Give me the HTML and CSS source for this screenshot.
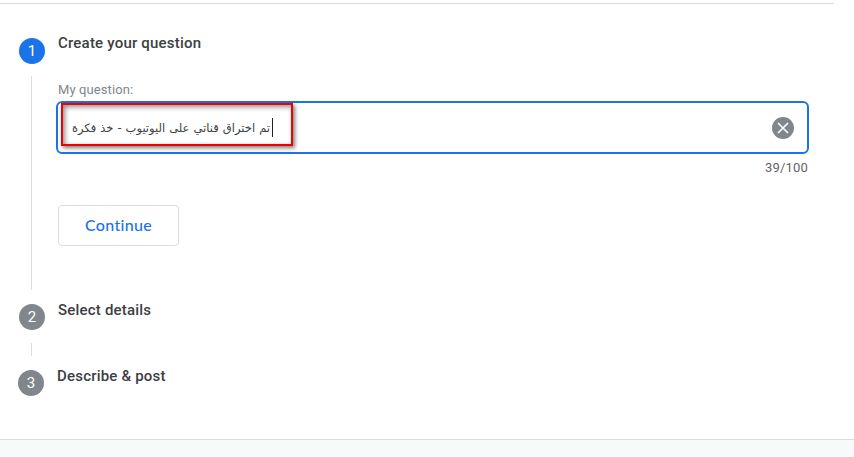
FILE: index.html
```
<!DOCTYPE html>
<html lang="en">
<head>
    <meta charset="UTF-8">
    <meta name="viewport" content="width=device-width, initial-scale=1.0">
    <title>Create your question</title>
    <link rel="stylesheet" href="styles.css">
</head>
<body>
    <main class="stepper">
        <section class="step step-active">
            <div class="rail">
                <span class="badge">1</span>
                <span class="line"></span>
            </div>
            <div class="content">
                <h2>Create your question</h2>
                <div class="label">My question:</div>
                <div class="field">
                    <div class="highlight"></div>
                    <div class="value"><span class="text" dir="rtl" lang="ar">تم اختراق قناتي على اليوتيوب - خذ فكرة</span><span class="caret"></span></div>
                    <svg class="clear" viewBox="0 0 22 22" width="22" height="22">
                        <circle cx="11" cy="11" r="11" fill="#80868b"/>
                        <path d="M6 6l10 10M16 6L6 16" stroke="#fff" stroke-width="1.6" fill="none"/>
                    </svg>
                </div>
                <div class="counter">39/100</div>
                <button type="button">Continue</button>
            </div>
        </section>
        <section class="step step-details">
            <div class="rail">
                <span class="badge">2</span>
                <span class="line"></span>
            </div>
            <div class="content">
                <h2>Select details</h2>
            </div>
        </section>
        <section class="step step-post">
            <div class="rail">
                <span class="badge">3</span>
            </div>
            <div class="content">
                <h2>Describe &amp; post</h2>
            </div>
        </section>
    </main>
    <footer></footer>
</body>
</html>
```
FILE: styles.css
```
* {
    margin: 0;
    padding: 0;
    box-sizing: border-box;
}

body {
    height: 100vh;
    display: flex;
    flex-direction: column;
    padding-top: 3px;
    overflow: hidden;
    background: #fff;
    color: #3c4043;
    font-family: Roboto, sans-serif;
}

.stepper {
    flex: 1;
    width: 834px;
    padding: 34px 25px 0 19px;
    border-top: 1px solid #dadce0;
}

.step {
    display: flex;
    gap: 13px;
}

.step-active {
    height: 266px;
}

.step-details {
    height: 66px;
}

.step-post {
    margin-left: -1px;
}

.rail {
    width: 26px;
    display: flex;
    flex-direction: column;
    align-items: center;
}

.badge {
    flex: none;
    width: 26px;
    height: 26px;
    border-radius: 50%;
    background: #80868b;
    color: #fff;
    font-size: 15px;
    line-height: 26px;
    text-align: center;
}

.step-active .badge {
    background: #1a73e8;
}

.line {
    flex: 1;
    width: 1px;
    margin: 12px 1px 14px 0;
    background: #dadce0;
}

.step-details .line {
    margin: 13px 1px 14px 0;
}

.content {
    flex: 1;
    display: flex;
    flex-direction: column;
}

h2 {
    margin-top: -4px;
    font-size: 15px;
    font-weight: 500;
    line-height: 20px;
    letter-spacing: 0.2px;
}

.step-active h2 {
    margin-top: -5px;
}

.label {
    margin-top: 29px;
    color: #80868b;
    font-size: 13px;
    line-height: 16px;
    letter-spacing: 0.1px;
}

.field {
    position: relative;
    display: flex;
    align-items: center;
    justify-content: space-between;
    height: 53px;
    margin: 3px 0 0 -2px;
    padding: 0 13px 0 14px;
    border: 2px solid #1a73e8;
    border-radius: 6px;
}

/* marker box laid over the left end of the input */
.highlight {
    position: absolute;
    top: 0;
    left: 3px;
    width: 232px;
    height: 43px;
    border: 2px solid #f00000;
    box-shadow: 2px 2px 4px rgba(0, 0, 0, 0.5), inset 2px 2px 5px rgba(0, 0, 0, 0.45);
}

.value {
    display: flex;
    align-items: center;
}

.text {
    width: 198px;
    color: #3c4043;
    font-family: "DejaVu Sans", sans-serif;
    font-size: 11.5px;
    line-height: 20px;
    word-spacing: 0.4px;
    white-space: nowrap;
}

.caret {
    width: 1px;
    height: 19px;
    margin-left: 2px;
    background: #202124;
}

.counter {
    margin-top: 5px;
    padding-right: 1px;
    color: #5f6368;
    font-size: 13px;
    line-height: 18px;
    letter-spacing: 0.2px;
    text-align: right;
}

button {
    width: 121px;
    height: 41px;
    margin-top: 28px;
    padding-bottom: 2px;
    border: 1px solid #dadce0;
    border-radius: 4px;
    background: #fff;
    color: #1a73e8;
    font-family: Lato, sans-serif;
    font-size: 16px;
    font-weight: 500;
    letter-spacing: 0.3px;
}

footer {
    height: 18px;
    border-top: 1px solid #dadce0;
    background: #f8f9fa;
}
```
